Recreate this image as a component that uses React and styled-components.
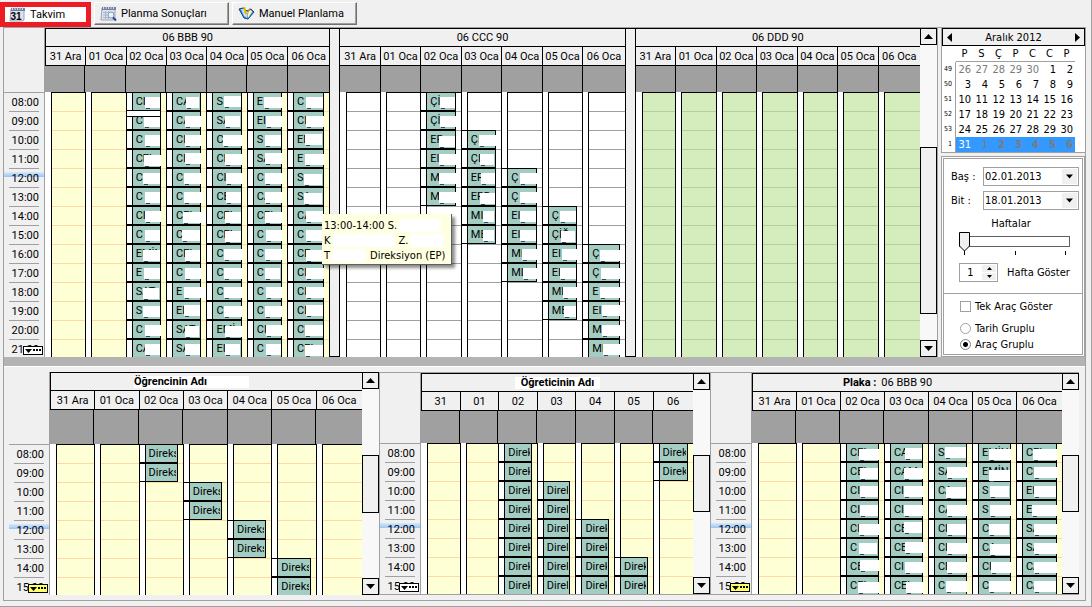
import styled, { createGlobalStyle } from "styled-components";

const GlobalStyle = createGlobalStyle`
  * {
    box-sizing: border-box;
  }

  body {
    margin: 0;
    background-color: #f0f0f0;
  }

  body, button, input, select, table {
    font-family: "DejaVu Sans Condensed", "Noto Sans", sans-serif;
    font-size: 11px;
    color: #000;
  }
`;

const Page = styled.div`
  padding: 0 5px 5px 3px;
  border-right: 1px solid #a0a0a0;
  border-bottom: 1px solid #a0a0a0;
`;

const Tabs = styled.nav`
  display: flex;
  align-items: center;
  gap: 3px;
  height: 27px;
  margin-left: -3px;
`;

const Tab = styled.button`
  display: flex;
  align-items: center;
  gap: 4px;
  width: ${(props) => props.$width};
  height: 23px;
  padding: 0 5px;
  font-family: Roboto, "Noto Sans", sans-serif;
  background-color: #f0f0f0;
  border: 1px solid;
  border-color: #fff #707070 #707070 #fff;
  box-shadow: inset -1px -1px 0 #a0a0a0;
  white-space: nowrap;
`;

const ActiveTab = styled(Tab)`
  height: 25px;
  padding: 0 4px;
  margin-top: 2px;
  background-color: #fff;
  border: 5px solid #ed1c24;
  box-shadow: none;
`;

const Content = styled.main`
  border: 1px solid #a0a0a0;
`;

const TopRow = styled.div`
  position: relative;
  display: flex;
  gap: 3px;
`;

const Splitter = styled.div`
  height: 9px;
  background-color: #b3b3b3;
`;

const BottomRow = styled.div`
  display: grid;
  grid-template-columns: 370fr 331fr 369fr;
  padding: 5px 6px 5px 5px;
  border-top: 1px solid #fff;
`;

const SchedulerBox = styled.section`
  display: flex;
  flex: 1;
  min-width: 0;
  font-family: Roboto, "Noto Sans", sans-serif;
  border: 0 solid #a0a0a0;
  border-width: ${(props) => props.$frame || "0"};
`;

const TimeColumn = styled.div`
  flex: 0 0 41px;
  display: flex;
  flex-direction: column;
  border-right: 1px solid #a0a0a0;
`;

const TimeHead = styled.div`
  height: ${(props) => props.$height}px;
`;

const TimeList = styled.div`
  position: relative;
  height: ${(props) => props.$height}px;
  overflow: hidden;
  border-top: 1px solid #a0a0a0;
`;

const TimeLabel = styled.div`
  height: 19px;
  margin: 0 5px;
  line-height: 19px;
  text-align: right;
  white-space: nowrap;
  border-bottom: 1px solid #a0a0a0;
`;

const NowBand = styled.div`
  position: absolute;
  top: 79px;
  left: 0;
  right: 0;
  height: 5px;
  background: linear-gradient(#d8e8f8, #96c4f8);
  z-index: -1;
`;

const MoreMark = styled.svg`
  position: absolute;
  right: 1px;
  bottom: 2px;
`;

const Groups = styled.div`
  flex: 1;
  display: flex;
  min-width: 0;
`;

const GroupBox = styled.div`
  flex: 1 1 0;
  min-width: 0;
`;

const GroupGap = styled.div`
  flex: 0 0 11px;
  border: 1px solid #000;
`;

const GroupTitle = styled.div`
  display: flex;
  align-items: center;
  justify-content: center;
  gap: 5px;
  height: 19px;
  padding-right: ${(props) => props.$shift || 0}px;
  border-top: 1px solid #000;
  border-bottom: 1px solid #000;
  border-left: ${(props) => (props.$lead ? "1px solid #000" : "0")};
  white-space: nowrap;
`;

const Caption = styled.strong`
  display: block;
  height: 12px;
  padding: 0 ${(props) => props.$after || 0}px 0 ${(props) => props.$before || 0}px;
  line-height: 12px;
  background-color: ${(props) => (props.$blank ? "#fff" : "transparent")};
`;

const Cells = styled.div`
  display: flex;
  height: ${(props) => props.$height}px;
  background-color: ${(props) => props.$color || "#f0f0f0"};
`;

const HeadCell = styled.div`
  flex: 1 1 0;
  min-width: 0;
  line-height: 20px;
  text-align: center;
  white-space: nowrap;
  border-bottom: ${(props) => (props.$plain ? "0" : "1px solid #000")};

  & + & {
    border-left: 1px solid #000;
  }

  &:first-child {
    border-left: ${(props) => (props.$lead ? "1px solid #000" : "0")};
  }

  &:last-child {
    flex-grow: 1.05;
  }
`;

const GroupBody = styled.div`
  display: flex;
  height: ${(props) => props.$height}px;
  overflow: hidden;
`;

const DayColumn = styled.div`
  flex: 1 1 0;
  min-width: 0;
  background-color: ${(props) => props.$fill};
  border-left: ${(props) => (props.$lead ? "1px solid #fff" : "0")};

  & + & {
    border-left: 1px solid #000;
  }

  &:last-child {
    flex-grow: 1.05;
  }
`;

const SlotRow = styled.div`
  display: flex;
  height: 19px;
`;

const Strip = styled.div`
  flex: 0 0 ${(props) => (props.$wide ? 7 : 6)}px;
  background-color: #fff;
  border-right: 1px solid #000;
`;

const Slot = styled.div`
  flex: 1;
  border-top: 1px solid ${(props) => props.$line};
`;

const SlotTail = styled(Slot)`
  flex: 0 0 5px;
`;

const EventBox = styled.div`
  flex: 1;
  display: flex;
  min-width: 0;
  border: solid #000;
  border-width: 1px 1px 1px 0;
`;

const EventText = styled.div`
  position: relative;
  flex: 1;
  min-width: 0;
  background-color: #a3cdc2;
`;

const EventLabel = styled.div`
  margin: 0 1px 0 3px;
  line-height: 17px;
  overflow: hidden;
  white-space: nowrap;
`;

const Patch = styled.div`
  position: absolute;
  top: ${(props) => props.$top}px;
  left: ${(props) => props.$left}px;
  right: ${(props) => -props.$over}px;
  height: 11px;
  margin-left: 1px;
  background-color: #fff;

  &::after {
    content: "";
    position: absolute;
    top: 11px;
    left: 1px;
    width: 4px;
    border-top: 1px dashed #2c4a66;
  }
`;

const Notch = styled.div`
  position: absolute;
  top: -1px;
  left: -6px;
  right: 0;
  height: 6px;
  background-color: #fff;
  border-bottom: 1px solid #000;
`;

const ScrollBar = styled.div`
  flex: 0 0 17px;
  display: flex;
  flex-direction: column;
  background-color: #f8f8f8;
`;

const ScrollButton = styled.button`
  display: flex;
  align-items: center;
  justify-content: center;
  height: 17px;
  padding: 0;
  background-color: #f0f0f0;
  border: 1px solid #000;
`;

const ScrollTrack = styled.div`
  flex: 1;
  padding-top: ${(props) => props.$offset}px;
`;

const ScrollThumb = styled.div`
  height: ${(props) => props.$size}px;
  background-color: #f0f0f0;
  border: 1px solid #000;
`;

const SideBar = styled.aside`
  flex: 0 0 144px;
  display: flex;
  flex-direction: column;
  gap: 3px;
`;

const CalendarBox = styled.div`
  background-color: #fff;
  border: solid #a0a0a0;
  border-width: 0 0 1px 1px;
`;

const CalendarHead = styled.div`
  display: flex;
  align-items: center;
  justify-content: space-between;
  height: 18px;
  padding: 0 2px;
  background-color: #f0f0f0;
  border: 1px solid #000;
`;

const MonthButton = styled.button`
  display: flex;
  padding: 2px;
  background: none;
  border: 0;
`;

const CalendarTable = styled.table`
  table-layout: fixed;
  width: 133px;
  border-collapse: separate;
  border-spacing: 0;
`;

const DayName = styled.th`
  height: 16px;
  padding: 0;
  line-height: 14px;
  font-weight: 400;
  border-bottom: 1px solid #a0a0a0;
`;

const CornerCell = styled.th`
  width: 14px;
  padding: 0;
`;

const WeekNumber = styled.th`
  height: 15px;
  padding: 0 3px 0 0;
  line-height: 15px;
  font-size: 7px;
  font-weight: 400;
  text-align: right;
  border-right: 1px solid #a0a0a0;
`;

const Day = styled.td`
  height: 15px;
  padding: 0 2px 0 0;
  line-height: 15px;
  text-align: right;
  color: ${(props) => (props.$light ? "#fff" : props.$dim ? "#7a7a7a" : "#000")};
  font-weight: ${(props) => (props.$strong ? 700 : 400)};
  background-color: ${(props) => (props.$selected ? "#3399ff" : "transparent")};
`;

const OptionsBox = styled.div`
  flex: 1;
  background-color: #fff;
  border: 3px double #a0a0a0;
`;

const RangeForm = styled.div`
  padding: 8px 3px 11px 7px;
  border-bottom: 1px solid #a0a0a0;
`;

const Field = styled.div`
  display: flex;
  align-items: center;
  height: 19px;
  margin-bottom: 5px;
`;

const FieldLabel = styled.label`
  flex: 0 0 32px;
  white-space: nowrap;
`;

const SelectWrap = styled.div`
  position: relative;
  flex: 1;
`;

const DateSelect = styled.select`
  appearance: none;
  display: block;
  width: 100%;
  height: 19px;
  padding: 0 0 0 1px;
  background-color: #fff;
  border: 1px solid #a0a0a0;
  border-radius: 0;
`;

const SelectArrow = styled.span`
  position: absolute;
  top: 2px;
  right: 2px;
  display: flex;
  align-items: center;
  justify-content: center;
  width: 15px;
  height: 15px;
  background-color: #f0f0f0;
  pointer-events: none;
`;

const SliderLabel = styled.label`
  display: block;
  height: 16px;
  padding-right: 8px;
  line-height: 17px;
  text-align: center;
`;

const Slider = styled.input`
  appearance: none;
  display: block;
  width: 111px;
  height: 20px;
  margin: 0 0 0 8px;
  background: none;

  &::-webkit-slider-runnable-track {
    height: 11px;
    background-color: #fff;
    border: 1px solid #606060;
  }

  &::-webkit-slider-thumb {
    appearance: none;
    width: 11px;
    height: 20px;
    margin: -5px 0 0 -1px;
    background: url("data:image/svg+xml,%3Csvg xmlns='http://www.w3.org/2000/svg' width='11' height='20'%3E%3Cpath d='M.5 .5H10.5V14L5.5 19L.5 14Z' fill='%23f0f0f0' stroke='%23000'/%3E%3C/svg%3E") no-repeat;
  }
`;

const Ticks = styled.div`
  display: flex;
  justify-content: space-between;
  width: 102px;
  height: 12px;
  margin-left: 13px;
`;

const Tick = styled.span`
  width: 1px;
  height: 4px;
  background-color: #000;
`;

const SpinRow = styled.div`
  display: flex;
  align-items: center;
  gap: 9px;
  margin-left: 8px;
`;

const SpinBox = styled.div`
  display: flex;
  width: 39px;
  height: 19px;
  background-color: #fff;
  border: 1px solid #a0a0a0;
`;

const SpinInput = styled.input`
  width: 21px;
  padding: 0;
  text-align: center;
  border: 0;
  background: none;
`;

const SpinButtons = styled.div`
  display: flex;
  flex: 1;
  flex-direction: column;
  gap: 1px;
  padding: 1px;
`;

const SpinButton = styled.button`
  flex: 1;
  display: flex;
  align-items: center;
  justify-content: center;
  padding: 0;
  border: 0;
  background-color: #f0f0f0;
`;

const Choices = styled.div`
  display: flex;
  flex-direction: column;
  padding: 4px 0 0 16px;
`;

const Choice = styled.label`
  display: flex;
  align-items: center;
  gap: 4px;
  height: 16px;
  margin-bottom: ${(props) => props.$after || 0}px;
  white-space: nowrap;
`;

const CheckBox = styled.input`
  appearance: none;
  width: 11px;
  height: 11px;
  margin: 0;
  background-color: #fff;
  border: 1px solid #a0a0a0;
`;

const Radio = styled(CheckBox)`
  border-radius: 50%;

  &:checked {
    border-color: #808080;
    background: radial-gradient(circle, #000 2px, #fff 3px);
  }
`;

const Tooltip = styled.div`
  position: absolute;
  top: 186px;
  left: 318px;
  width: 130px;
  padding: 4px 2px 1px 2px;
  background-color: #ffffe1;
  border: solid #606060;
  border-width: 0 1px 1px 0;
  box-shadow: 3px 3px 3px rgba(0, 0, 0, 0.45);
  z-index: 1;
`;

const TooltipLine = styled.div`
  display: flex;
  align-items: center;
  height: 15px;
  line-height: 15px;
  white-space: nowrap;
`;

const Blank = styled.span`
  flex: 0 0 ${(props) => props.$size}px;
  height: 13px;
  margin: 0 4px 0 2px;
  background-color: #fff;
`;

const DATES = ["31 Ara", "01 Oca", "02 Oca", "03 Oca", "04 Oca", "05 Oca", "06 Oca"];
const SHORT_DATES = ["31", "01", "02", "03", "04", "05", "06"];

const YELLOW = { fill: "#ffffd5", line: "#ffd8a4" };
const WHITE = { fill: "#fff", line: "#a0a0a0" };
const GREEN = { fill: "#d5ecbc", line: "#b4cf9e" };

// one string per day: "text:patch left:patch overhang:patch top", first number is the starting row
const BBB_DAYS = [
  null,
  null,
  [0, "CI:11:0 C:10:0 C:11:0 CEL:10:1:6 C:9:0 C:11:0 CI:11:1 C:11:0 EMİN:9:0:6 E:10:0 SAT:9:-1:6 S:9:0 C:11:1 CA:11:0"],
  [0, "CA:12:-1 CA:11:2 CI:11:1 CEL:11:1:4 CI:10:1 C:10:3 CEL:9:6:6 C:8:0 CEL:11:0:6 C:11:2 E:10:6 EM:10:0:4 SAT:11:-1:6 SA:11:0"],
  [0, "S:10:0:4 SA:11:-1 C:9:1 CI:11:1 CI:12:1 CE:12:0 CEL:11:0:6 CEL:11:0:6 C:10:2 C:10:1 C:10:1 C:10:1 EMİ:11:1:6 EI:11:-1"],
  [0, "E:9:1 EI:11:1 S:10:0 SA:10:1:4 C:10:1 CA:10:1 CEL:10:2:6 C:11:1 C:10:1 C:10:-1 C:11:1 C:10:1 CI:11:2 C:11:0"],
  [0, "C:11:0 CI:11:1 EM:10:-1:4 E:10:1 S:9:-1:6 SA:9:-1:6 CA:11:0 C:11:0 CE:11:0:6 CI:11:1 CI:11:1 CE:11:0:4 CE:10:0 CEL:10:0:6"],
];

const CCC_DAYS = [
  null,
  null,
  [0, "Çİ:12:0 Çİ:12:1 ER:11:0:6 EI:11:1 M:11:1 M:11:1"],
  [2, "ÇI:10:1 ÇI:11:-1 ER:12:0 ERD:11:0:6 MI:14:-1 ME:14:-1"],
  [4, "Ç:11:1 Ç:11:1 EI:11:0 EI:11:0 MI:13:1 ML:14:1"],
  [6, "Ç:10:0 ÇİĞ:11:-1:6 EI:12:1 EI:10:0 ML:13:1 ME:14:0"],
  [8, "Ç:10:1:6 Ç:11:1 E:10:1 EI:12:1:4 M:12:1 MI:13:1"],
];

const PLAKA_DAYS = [
  null,
  null,
  [0, "CEL:11:1:6 CEL:12:0:6 CI:12:0 CI:12:0 CI:11:2 C:11:-1 CEL:12:1:3 CEL:10:1:6"],
  [0, "CA:13:0 CAM:12:1:6 CI:12:1 CI:12:1 CE:12:0:3 CEL:13:3:4 CI:13:2 CEL:14:1:6"],
  [0, "S:9:0:4 SA:11:2 CA:10:0:6 CA:11:1 CI:11:0 CI:11:2 CE:11:1 C:10:1"],
  [0, "EMİNE:9:1:6 EMİNE:9:0:8 S:10:-1 S:10:1 C:9:-1 CA:10:0:6 CI:11:1 C:9:1"],
  [0, "CEL:9:1:6 CI:10:2 EI:10:0 E:8:1 SA:10:1 SA:10:1 CA:10:1 CA:10:0"],
];

const STUDENT_DAYS = [null, null, [0, 2], [2, 2], [4, 2], [6, 2], null];
const TEACHER_DAYS = [null, null, [0, 8], [2, 6], [4, 4], [6, 2], [0, 2]];

const WEEKS = [
  [49, [26, 27, 28, 29, 30, 1, 2]],
  [50, [3, 4, 5, 6, 7, 8, 9]],
  [51, [10, 11, 12, 13, 14, 15, 16]],
  [52, [17, 18, 19, 20, 21, 22, 23]],
  [53, [24, 25, 26, 27, 28, 29, 30]],
  [1, [31, 1, 2, 3, 4, 5, 6]],
];

function hour(index) {
  return `${String(index + 8).padStart(2, "0")}:00`;
}

function readEvents(day, label) {
  if (!day) return {};
  const [start, data] = day;
  const events = {};
  if (typeof data === "number") {
    for (let i = 0; i < data; i++) events[start + i] = { text: label };
    return events;
  }
  data.split(" ").forEach((item, i) => {
    const [text, left, over, top] = item.split(":");
    events[start + i] = { text, patch: { left: +left, over: +over, top: top ? +top : 5 } };
  });
  return events;
}

function Arrow({ up, width = 9 }) {
  return (
    <svg width={width} height="5" viewBox="0 0 9 5" aria-hidden="true">
      <path d={up ? "M0 5L4.5 0L9 5Z" : "M0 0H9L4.5 5Z"} />
    </svg>
  );
}

function CalendarIcon({ search }) {
  return (
    <svg width="17" height="17" viewBox="0 0 17 17" aria-hidden="true">
      <path d="M2 3H15V14L13 15H1Z" fill="#dde3ee" stroke="#9aa4b6" />
      <path d="M2 2H16V5H2Z" fill="#71809c" />
      <path d="M3.500 1V4M6 1V4M8.500 1V4M11 1V4M13.500 1V4" stroke="#d5dbe6" />
      {search ? (
        <>
          <path d="M3 7.500H14M3 10H13M3 12.500H10M5.500 6V14M8.500 6V14" stroke="#a9b6cc" />
          <circle cx="11" cy="10" r="3" fill="#e6f2fc" stroke="#8c99b2" />
          <path d="M13 12.500L16 15.500" stroke="#2b3f8c" strokeWidth="2" />
        </>
      ) : (
        <text x="7" y="14" textAnchor="middle" fontSize="10" fontWeight="700" fontFamily="Liberation Sans, sans-serif">
          31
        </text>
      )}
    </svg>
  );
}

function BookIcon() {
  return (
    <svg width="17" height="15" viewBox="0 0 17 15" aria-hidden="true">
      <path d="M1 3L5 2L9 5L13 3L16 6L10 13L6 12Z" fill="#3d8fdc" stroke="#15407c" />
      <path d="M3 3L6 3L9 6V12L6 10Z" fill="#b9e2ff" />
      <path d="M9 6L13 4L14 6L10 12Z" fill="#fff6c8" />
      <path d="M6 1L8 8" stroke="#e8b400" strokeWidth="2" />
      <path d="M12 2L9 9" stroke="#d4a017" />
    </svg>
  );
}

function More({ color }) {
  return (
    <MoreMark width="20" height="9" aria-hidden="true">
      <rect x=".5" y=".5" width="19" height="8" fill={color} stroke="#000" />
      <path d="M2 3H9L5.500 7Z" />
      <path d="M10 3H12V5H10ZM13 3H15V5H13ZM16 3H18V5H16Z" />
    </MoreMark>
  );
}

function Column({ day, label, colors, lead, first, rows, notch }) {
  const events = readEvents(day, label);
  return (
    <DayColumn $fill={colors.fill} $lead={lead && first}>
      {Array.from({ length: rows }, (_, i) => {
        const event = events[i];
        const line = i === 0 ? "#000" : colors.line;
        if (!event) {
          return (
            <SlotRow key={i}>
              <Strip $wide={first && !lead} />
              <Slot $line={line} />
            </SlotRow>
          );
        }
        return (
          <SlotRow key={i}>
            <EventBox>
              <Strip />
              <EventText>
                <EventLabel>{event.text}</EventLabel>
                {event.patch && (
                  <Patch $left={event.patch.left} $over={event.patch.over} $top={event.patch.top - 1} />
                )}
                {notch && i === 1 && <Notch />}
              </EventText>
            </EventBox>
            <SlotTail $line={line} />
          </SlotRow>
        );
      })}
    </DayColumn>
  );
}

function Group({ title, dates = DATES, days, label, colors, lead, shift, allDay, rows, notch }) {
  return (
    <GroupBox>
      <GroupTitle $lead={lead} $shift={shift}>{title}</GroupTitle>
      <Cells $height={19}>
        {dates.map((date) => (
          <HeadCell key={date} $lead={lead}>{date}</HeadCell>
        ))}
      </Cells>
      <Cells $height={allDay} $color="#a0a0a0">
        {dates.map((date) => (
          <HeadCell key={date} $plain />
        ))}
      </Cells>
      <GroupBody $height={rows * 19 - 1}>
        {dates.map((date, i) => (
          <Column
            key={date}
            day={days && days[i]}
            label={label}
            colors={colors}
            lead={lead}
            first={i === 0}
            rows={rows}
            notch={notch && i === 2}
          />
        ))}
      </GroupBody>
    </GroupBox>
  );
}

function Scheduler({ frame, rows, allDay, thumb, moreColor = "#fff", children }) {
  return (
    <SchedulerBox $frame={frame}>
      <TimeColumn>
        <TimeHead $height={38 + allDay} />
        <TimeList $height={rows * 19 - 1}>
          <NowBand />
          {Array.from({ length: rows }, (_, i) => (
            <TimeLabel key={i}>{hour(i)}</TimeLabel>
          ))}
          <More color={moreColor} />
        </TimeList>
      </TimeColumn>
      <Groups>{children}</Groups>
      <ScrollBar>
        <ScrollButton type="button" aria-label="Yukarı"><Arrow up /></ScrollButton>
        <ScrollTrack $offset={thumb[0]}>
          <ScrollThumb $size={thumb[1]} />
        </ScrollTrack>
        <ScrollButton type="button" aria-label="Aşağı"><Arrow /></ScrollButton>
      </ScrollBar>
    </SchedulerBox>
  );
}

function Calendar() {
  return (
    <CalendarBox>
      <CalendarHead>
        <MonthButton type="button" aria-label="Önceki ay">
          <svg width="5" height="9"><path d="M5 0V9L0 4.500Z" /></svg>
        </MonthButton>
        <span>Aralık 2012</span>
        <MonthButton type="button" aria-label="Sonraki ay">
          <svg width="5" height="9"><path d="M0 0V9L5 4.500Z" /></svg>
        </MonthButton>
      </CalendarHead>
      <CalendarTable>
        <thead>
          <tr>
            <CornerCell />
            {["P", "S", "Ç", "P", "C", "C", "P"].map((name, i) => (
              <DayName key={i} scope="col">{name}</DayName>
            ))}
          </tr>
        </thead>
        <tbody>
          {WEEKS.map(([week, days], row) => (
            <tr key={week}>
              <WeekNumber scope="row">{week}</WeekNumber>
              {days.map((day, i) => (
                <Day
                  key={day}
                  $selected={row === 5}
                  $light={row === 5 && i === 0}
                  $dim={(row === 0 && i < 5) || row === 5}
                  $strong={row === 5 && i > 1}
                >
                  {day}
                </Day>
              ))}
            </tr>
          ))}
        </tbody>
      </CalendarTable>
    </CalendarBox>
  );
}

function DateField({ id, label, value }) {
  return (
    <Field>
      <FieldLabel htmlFor={id}>{label}</FieldLabel>
      <SelectWrap>
        <DateSelect id={id} defaultValue={value}>
          <option>{value}</option>
        </DateSelect>
        <SelectArrow><Arrow width={7} /></SelectArrow>
      </SelectWrap>
    </Field>
  );
}

function Options() {
  return (
    <OptionsBox>
      <RangeForm>
        <DateField id="start" label="Baş :" value="02.01.2013" />
        <DateField id="end" label="Bit :" value="18.01.2013" />
        <SliderLabel htmlFor="weeks">Haftalar</SliderLabel>
        <Slider id="weeks" type="range" min="1" max="3" defaultValue="1" />
        <Ticks>
          <Tick />
          <Tick />
          <Tick />
        </Ticks>
        <SpinRow>
          <SpinBox>
            <SpinInput id="count" type="text" defaultValue="1" />
            <SpinButtons>
              <SpinButton type="button" aria-label="Artır"><Arrow up width={5} /></SpinButton>
              <SpinButton type="button" aria-label="Azalt"><Arrow width={5} /></SpinButton>
            </SpinButtons>
          </SpinBox>
          <label htmlFor="count">Hafta Göster</label>
        </SpinRow>
      </RangeForm>
      <Choices>
        <Choice $after={6}>
          <CheckBox type="checkbox" />
          Tek Araç Göster
        </Choice>
        <Choice>
          <Radio type="radio" name="grouping" />
          Tarih Gruplu
        </Choice>
        <Choice>
          <Radio type="radio" name="grouping" defaultChecked />
          Araç Gruplu
        </Choice>
      </Choices>
    </OptionsBox>
  );
}

function App() {
  return (
    <>
      <GlobalStyle />
      <Page>
        <Tabs>
          <ActiveTab type="button" $width="91px">
            <CalendarIcon />
            Takvim
          </ActiveTab>
          <Tab type="button" $width="135px">
            <CalendarIcon search />
            Planma Sonuçları
          </Tab>
          <Tab type="button" $width="125px">
            <BookIcon />
            Manuel Planlama
          </Tab>
        </Tabs>
        <Content>
          <TopRow>
            <Scheduler frame="0 1px 0 0" rows={14} allDay={26} thumb={[102, 167]}>
              <Group title="06 BBB 90" days={BBB_DAYS} colors={YELLOW} allDay={26} rows={14} lead notch />
              <GroupGap />
              <Group title="06 CCC 90" days={CCC_DAYS} colors={WHITE} allDay={26} rows={14} />
              <GroupGap />
              <Group title="06 DDD 90" colors={GREEN} allDay={26} rows={14} />
            </Scheduler>
            <SideBar>
              <Calendar />
              <Options />
            </SideBar>
            <Tooltip role="tooltip">
              <TooltipLine>13:00-14:00 S.<Blank $size={42} /></TooltipLine>
              <TooltipLine>K<Blank $size={62} />Z.<Blank $size={34} /></TooltipLine>
              <TooltipLine>T<Blank $size={34} />Direksiyon (EP)</TooltipLine>
            </Tooltip>
          </TopRow>
          <Splitter />
          <BottomRow>
            <Scheduler rows={8} allDay={34} thumb={[66, 58]} moreColor="#ffff66">
              <Group
                title={<Caption $blank $after={42}>Öğrencinin Adı</Caption>}
                days={STUDENT_DAYS}
                label="Direks"
                colors={YELLOW}
                allDay={34}
                rows={8}
                shift={30}
                lead
              />
            </Scheduler>
            <Scheduler frame="1px 0 1px 1px" rows={8} allDay={32} thumb={[65, 57]}>
              <Group
                title={<Caption $blank $before={6} $after={6}>Öğreticinin Adı</Caption>}
                dates={SHORT_DATES}
                days={TEACHER_DAYS}
                label="Direk"
                colors={YELLOW}
                allDay={32}
                rows={8}
                lead
              />
            </Scheduler>
            <Scheduler frame="1px 0 1px 1px" rows={8} allDay={32} thumb={[65, 57]} moreColor="#ffff66">
              <Group
                title={<><Caption>Plaka :</Caption>06 BBB 90</>}
                days={PLAKA_DAYS}
                colors={YELLOW}
                allDay={32}
                rows={8}
                shift={40}
                lead
              />
            </Scheduler>
          </BottomRow>
        </Content>
      </Page>
    </>
  );
}

export default App;
